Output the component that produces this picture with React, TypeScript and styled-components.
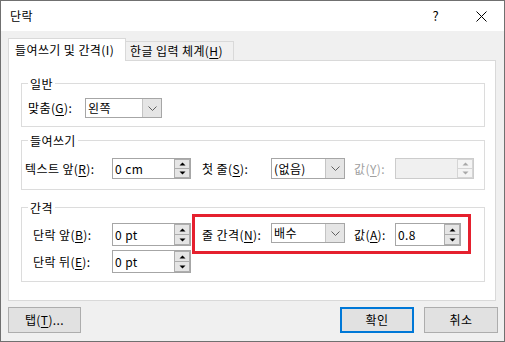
import React from 'react'
import styled, { createGlobalStyle } from 'styled-components'

const GlobalStyle = createGlobalStyle`
  html, body {
    margin: 0;
    padding: 0;
    background: #ffffff;
  }
  body {
    font-family: "Noto Sans CJK KR", "Noto Sans", sans-serif;
    font-size: 12px;
    letter-spacing: 0.4px;
    color: #000000;
  }
  * {
    box-sizing: border-box;
  }
  u {
    text-decoration-thickness: 1px;
    text-underline-offset: 2px;
  }
`

// window frame
const Window = styled.div`
  width: 505px;
  height: 342px;
  border: 1px solid #707070;
  display: flex;
  flex-direction: column;
  background: #f0f0f0;
`

const TitleBar = styled.div`
  height: 30px;
  flex-shrink: 0;
  display: flex;
  align-items: center;
  padding-left: 9px;
  background: #ffffff;
`

const Title = styled.span`
  flex: 1;
  line-height: 16px;
`

const HelpGlyph = styled.span`
  margin-right: 37px;
  font-size: 13px;
  line-height: 16px;
`

const CloseGlyph = styled.svg`
  margin-right: 17px;
`

const Body = styled.div`
  flex: 1;
  display: flex;
  flex-direction: column;
  padding: 7px 8px 8px 7px;
`

// tabs
const TabRow = styled.div`
  height: 22px;
  display: flex;
  align-items: flex-end;
`

const Tab = styled.div<{ $active?: boolean; $w: number }>`
  position: relative;
  z-index: ${p => (p.$active ? 1 : 0)};
  width: ${p => p.$w}px;
  height: ${p => (p.$active ? 23 : 19)}px;
  margin-bottom: ${p => (p.$active ? -1 : 0)}px;
  margin-left: ${p => (p.$active ? 0 : -1)}px;
  padding-left: ${p => (p.$active ? 6 : 4)}px;
  display: flex;
  align-items: center;
  line-height: 16px;
  white-space: nowrap;
  background: ${p => (p.$active ? '#ffffff' : '#f0f0f0')};
  border: 1px solid #d9d9d9;
  border-bottom: none;
`

const Panel = styled.div`
  height: 241px;
  flex-shrink: 0;
  display: flex;
  flex-direction: column;
  padding: 15px 10px 0 12px;
  background: #ffffff;
  border: 1px solid #d9d9d9;
`

// group boxes
const Group = styled.fieldset<{ $mt: number }>`
  margin: ${p => p.$mt}px 0 0;
  padding: 0;
  min-width: 0;
  border: 1px solid #dcdcdc;
`

const Legend = styled.legend`
  margin-left: 6px;
  padding: 0 2px;
  line-height: 15px;
`

const GroupBody = styled.div<{ $pt: number; $pb: number }>`
  display: flex;
  flex-direction: column;
  gap: 4px;
  padding: ${p => p.$pt}px 0 ${p => p.$pb}px;
`

const Row = styled.div<{ $h: number }>`
  height: ${p => p.$h}px;
  display: flex;
  align-items: flex-start;
`

const Label = styled.div<{ $w: number; $pl: number; $disabled?: boolean }>`
  width: ${p => p.$w}px;
  align-self: stretch;
  flex-shrink: 0;
  display: flex;
  align-items: center;
  padding-left: ${p => p.$pl}px;
  line-height: 16px;
  white-space: nowrap;
  color: ${p => (p.$disabled ? '#a0a0a0' : '#000000')};
`

// combo box
const ComboBox = styled.div<{ $w: number; $h: number }>`
  width: ${p => p.$w}px;
  height: ${p => p.$h}px;
  flex-shrink: 0;
  display: flex;
  background: #ffffff;
  border: 1px solid #a6a6a6;
`

const ComboText = styled.div`
  flex: 1;
  display: flex;
  align-items: center;
  padding-left: 2px;
  line-height: 16px;
  white-space: nowrap;
`

const ComboDrop = styled.div`
  width: 19px;
  display: flex;
  align-items: center;
  justify-content: center;
  background: #e5e5e5;
  border-left: 1px solid #c4c4c4;
`

// spin box
const SpinBox = styled.div<{ $w: number; $h: number; $disabled?: boolean }>`
  width: ${p => p.$w}px;
  height: ${p => p.$h}px;
  flex-shrink: 0;
  display: flex;
  background: ${p => (p.$disabled ? '#f0f0f0' : '#ffffff')};
  border: 1px solid ${p => (p.$disabled ? '#cccccc' : '#a6a6a6')};
`

const SpinText = styled.div`
  flex: 1;
  display: flex;
  align-items: center;
  padding-left: 2px;
  line-height: 16px;
  white-space: nowrap;
`

const SpinButtons = styled.div`
  width: 16px;
  display: flex;
  flex-direction: column;
`

const SpinButton = styled.div<{ $disabled?: boolean }>`
  flex: 1;
  display: flex;
  align-items: center;
  justify-content: center;
  background: ${p => (p.$disabled ? '#f4f4f4' : '#e5e5e5')};
  border: 1px solid ${p => (p.$disabled ? '#d5d5d5' : '#adadad')};

  & + & {
    border-top: none;
  }
`

// red highlight around line spacing
const Highlight = styled.div`
  display: flex;
  align-items: flex-start;
  margin: -9px 0 -8px 1px;
  padding: 6px 7px 5px 0;
  border: 3px solid #e5202e;
`

const HighlightRow = styled.div`
  height: 23px;
  display: flex;
  align-items: flex-start;
`

// bottom buttons
const ButtonRow = styled.div`
  height: 26px;
  display: flex;
  gap: 10px;
  margin: 6px -2px 0 0;
`

const Button = styled.div<{ $w: number; $default?: boolean }>`
  width: ${p => p.$w}px;
  display: flex;
  align-items: center;
  justify-content: center;
  line-height: 16px;
  background: #e1e1e1;
  border: ${p => (p.$default ? '2px solid #0078d7' : '1px solid #adadad')};
`

const Spacer = styled.div`
  flex: 1;
`

const Arrow: React.FC<{ up?: boolean; disabled?: boolean }> = ({ up, disabled }) => (
  <svg width="7" height="4" viewBox="0 0 7 4">
    <path
      d={up ? 'M0.5 3.5 L3.5 0.5 L6.5 3.5Z' : 'M0.5 0.5 L3.5 3.5 L6.5 0.5Z'}
      fill={disabled ? '#a8a8a8' : '#000000'}
    />
  </svg>
)

const Chevron = () => (
  <svg width="9" height="5" viewBox="0 0 9 5">
    <polyline points="0.5,0.5 4.5,4.5 8.5,0.5" fill="none" stroke="#606060" strokeWidth="1" />
  </svg>
)

const Combo: React.FC<{ value: string; w: number; h: number }> = ({ value, w, h }) => (
  <ComboBox $w={w} $h={h}>
    <ComboText>{value}</ComboText>
    <ComboDrop>
      <Chevron />
    </ComboDrop>
  </ComboBox>
)

const Spin: React.FC<{ value: string; w: number; h: number; disabled?: boolean }> = ({ value, w, h, disabled }) => (
  <SpinBox $w={w} $h={h} $disabled={disabled}>
    <SpinText>{value}</SpinText>
    <SpinButtons>
      <SpinButton $disabled={disabled}>
        <Arrow up disabled={disabled} />
      </SpinButton>
      <SpinButton $disabled={disabled}>
        <Arrow disabled={disabled} />
      </SpinButton>
    </SpinButtons>
  </SpinBox>
)

const App: React.FC = () => {
  return <>
    <GlobalStyle />
    <Window>
      <TitleBar>
        <Title>단락</Title>
        <HelpGlyph>?</HelpGlyph>
        <CloseGlyph width="11" height="11" viewBox="0 0 11 11">
          <path d="M0.5 0.5 L10.5 10.5 M10.5 0.5 L0.5 10.5" stroke="#000000" strokeWidth="1" />
        </CloseGlyph>
      </TitleBar>
      <Body>
        <TabRow>
          <Tab $active $w={118}>들여쓰기 및 간격(I)</Tab>
          <Tab $w={109}>한글 입력 체계(<u>H</u>)</Tab>
        </TabRow>
        <Panel>
          <Group $mt={0}>
            <Legend>일반</Legend>
            <GroupBody $pt={7} $pb={8}>
              <Row $h={20}>
                <Label $w={63} $pl={6}>맞춤(<u>G</u>):</Label>
                <Combo value="왼쪽" w={77} h={20} />
              </Row>
            </GroupBody>
          </Group>
          <Group $mt={6}>
            <Legend>들여쓰기</Legend>
            <GroupBody $pt={10} $pb={10}>
              <Row $h={21}>
                <Label $w={90} $pl={3}>텍스트 앞(<u>R</u>):</Label>
                <Spin value="0 cm" w={79} h={21} />
                <Label $w={80} $pl={11}>첫 줄(<u>S</u>):</Label>
                <Combo value="(없음)" w={74} h={21} />
                <Label $w={50} $pl={9} $disabled>값(<u>Y</u>):</Label>
                <Spin value="" w={79} h={21} disabled />
              </Row>
            </GroupBody>
          </Group>
          <Group $mt={10}>
            <Legend>간격</Legend>
            <GroupBody $pt={8} $pb={8}>
              <Row $h={23}>
                <Label $w={90} $pl={11}>단락 앞(<u>B</u>):</Label>
                <Spin value="0 pt" w={79} h={23} />
                <Highlight>
                  <HighlightRow>
                    <Label $w={76} $pl={7}>줄 간격(<u>N</u>):</Label>
                    <Combo value="배수" w={74} h={20} />
                    <Label $w={50} $pl={9}>값(<u>A</u>):</Label>
                    <Spin value="0.8" w={66} h={23} />
                  </HighlightRow>
                </Highlight>
              </Row>
              <Row $h={23}>
                <Label $w={90} $pl={11}>단락 뒤(<u>E</u>):</Label>
                <Spin value="0 pt" w={79} h={23} />
              </Row>
            </GroupBody>
          </Group>
        </Panel>
        <ButtonRow>
          <Button $w={73}>탭(<u>T</u>)...</Button>
          <Spacer />
          <Button $w={74} $default>확인</Button>
          <Button $w={74}>취소</Button>
        </ButtonRow>
      </Body>
    </Window>
  </>
}

export default App
